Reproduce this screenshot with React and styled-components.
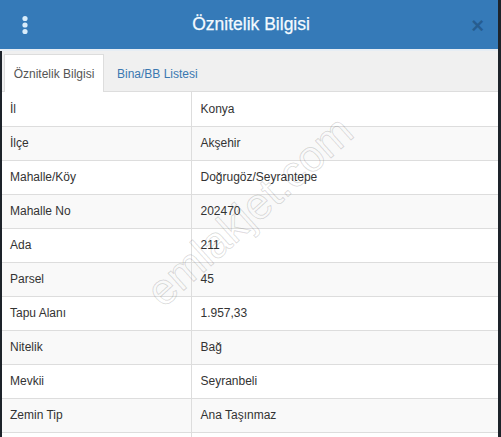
import React from 'react';
import styled, { createGlobalStyle } from 'styled-components';

const rows = [
  ['İl', 'Konya'],
  ['İlçe', 'Akşehir'],
  ['Mahalle/Köy', 'Doğrugöz/Seyrantepe'],
  ['Mahalle No', '202470'],
  ['Ada', '211'],
  ['Parsel', '45'],
  ['Tapu Alanı', '1.957,33'],
  ['Nitelik', 'Bağ'],
  ['Mevkii', 'Seyranbeli'],
  ['Zemin Tip', 'Ana Taşınmaz'],
  ['', ''],
];

const GlobalStyle = createGlobalStyle`
  html, body {
    margin: 0;
    padding: 0;
    background: #1d232a;
    overflow: hidden;
  }
  body {
    font-family: "Liberation Sans", Arial, sans-serif;
  }
`;

const App = () => {
  return (
    <>
      <GlobalStyle />
      <Panel>
        <Header>
          <MenuButton aria-label="menu">
            <svg width="8" height="20" viewBox="0 0 8 20">
              <circle cx="4" cy="3.5" r="2.6" fill="#d9ecfa" />
              <circle cx="4" cy="10" r="2.6" fill="#d9ecfa" />
              <circle cx="4" cy="16.5" r="2.6" fill="#d9ecfa" />
            </svg>
          </MenuButton>
          <Title>Öznitelik Bilgisi</Title>
          <Close>×</Close>
        </Header>
        <Body>
          <TabBar>
            <Tab $active>Öznitelik Bilgisi</Tab>
            <Tab>Bina/BB Listesi</Tab>
          </TabBar>
          <TableWrap>
            <Table>
              <tbody>
                {rows.map(([label, value], i) => (
                  <Row key={i} $striped={i % 2 === 1}>
                    <Cell $label>{label}</Cell>
                    <Cell>{value}</Cell>
                  </Row>
                ))}
              </tbody>
            </Table>
            <Watermark>emlakjet.com</Watermark>
          </TableWrap>
        </Body>
      </Panel>
    </>
  );
};

export default App;

const Panel = styled.div`
  width: 498px;
  height: 437px;
  background: #fff;
  overflow: hidden;
  display: flex;
  flex-direction: column;
`;

const Header = styled.div`
  height: 49px;
  flex: none;
  background: #357ab8;
  display: flex;
  align-items: center;
  padding: 0 14px 0 21px;
  box-shadow: 0 2px 0 #e6edf4;
`;

const MenuButton = styled.div`
  width: 8px;
  height: 20px;
  display: flex;
  margin-top: 1px;
`;

const Title = styled.h4`
  flex: 1;
  margin: 0;
  text-align: center;
  color: #f4faff;
  font-size: 17.5px;
  font-weight: 500;
  padding-left: 2px;
  -webkit-text-stroke: 0.25px #f4faff;
`;

const Close = styled.span`
  font-size: 22px;
  font-weight: bold;
  line-height: 1;
  color: rgba(10, 40, 70, 0.35);
  margin-top: 2px;
`;

const Body = styled.div`
  flex: 1;
  display: flex;
  flex-direction: column;
  border-left: 2px solid #1d232a;
  margin-top: 2px;
`;

const TabBar = styled.div`
  height: 40px;
  flex: none;
  background: #f0f0f0;
  display: flex;
  align-items: flex-end;
  padding: 0 0 0 2px;
  border-bottom: 1px solid #ddd;
`;

const Tab = styled.div`
  height: 38px;
  box-sizing: border-box;
  padding: 0 ${({ $active }) => ($active ? '8px' : '12px')};
  display: flex;
  align-items: center;
  font-size: 12px;
  color: ${({ $active }) => ($active ? '#555' : '#3a78b0')};
  background: ${({ $active }) => ($active ? '#fff' : 'transparent')};
  border: 1px solid ${({ $active }) => ($active ? '#ddd' : 'transparent')};
  border-bottom: none;
  margin-bottom: -1px;
  ${({ $active }) => ($active ? 'width: 100px; justify-content: center;' : '')}
`;

const TableWrap = styled.div`
  position: relative;
  flex: 1;
  overflow: hidden;
`;

const Table = styled.table`
  width: 100%;
  border-collapse: collapse;
  font-size: 12px;
  color: #333;
`;

const Row = styled.tr`
  background: ${({ $striped }) => ($striped ? '#f9f9f9' : '#fff')};
`;

const Cell = styled.td`
  height: 34px;
  box-sizing: border-box;
  padding: 0 8px;
  border-bottom: 1px solid #ddd;
  vertical-align: middle;
  ${({ $label }) =>
    $label ? 'width: 189px; border-right: 1px solid #ddd;' : 'padding-left: 9px;'}
`;

const Watermark = styled.div`
  position: absolute;
  left: 118px;
  top: 94px;
  font-size: 44px;
  color: transparent;
  -webkit-text-stroke: 1px rgba(0, 0, 0, 0.14);
  transform: rotate(-42deg);
  transform-origin: center;
  pointer-events: none;
  white-space: nowrap;
`;
